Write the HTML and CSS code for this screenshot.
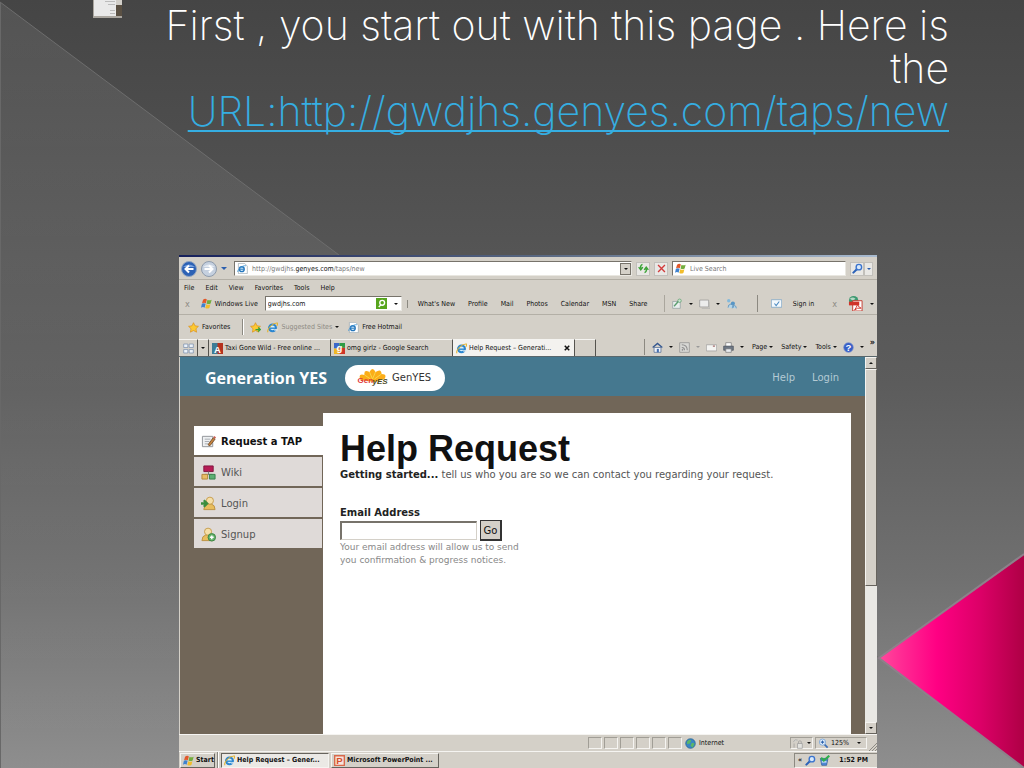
FILE: index.html
```html
<!DOCTYPE html>
<html lang="en">
<head>
  <meta charset="UTF-8">
  <meta name="viewport" content="width=device-width, initial-scale=1.0">
  <title>Help Request</title>
  <link rel="stylesheet" href="styles.css">
</head>
<body>

  <!-- Shared icons -->
  <svg class="sprite" aria-hidden="true">
    <symbol id="ie" viewBox="0 0 16 16">
      <circle cx="8" cy="8.500" r="5" fill="#d9f0fb" stroke="#2b86d0" stroke-width="3"/>
      <path d="M4 9h9" stroke="#2b86d0" stroke-width="2"/>
      <path d="M10.500 10.500h5v2h-5z" fill="#e4edf1"/>
      <path d="M1.500 15C-1 11 8 1 15 1.500c1.500 1 0 3-1 4" fill="none" stroke="#e3b32c" stroke-width="1.500"/>
    </symbol>
    <symbol id="iepage" viewBox="0 0 16 16">
      <path d="M2 .5h9l4 4v11H2z" fill="#fff" stroke="#98a4ae"/>
      <circle cx="7" cy="9" r="3.500" fill="#e4f4fc" stroke="#2677bd" stroke-width="2"/>
      <path d="M4 9h6" stroke="#2677bd" stroke-width="1.500"/>
      <path d="M1 13C1 9 8 3 13 4" fill="none" stroke="#3b94d4" stroke-width="1.200"/>
    </symbol>
    <symbol id="flag" viewBox="0 0 16 16">
      <path d="M3 2.500Q6 0 8.500 2L7 7.500Q4.500 6 1.500 7.500z" fill="#e2582a"/>
      <path d="M9.500 2.500Q12 4 15.500 2.500L14 8Q11 9.500 8 8z" fill="#74ad3e"/>
      <path d="M1.300 8.500Q4 7 6.700 8.500L5.200 14Q3 12.500 0 14z" fill="#3f82cf"/>
      <path d="M7.700 9Q10.500 10.500 13.700 9L12.200 14.500Q9 16 6.200 14.500z" fill="#f2bd2b"/>
    </symbol>
    <symbol id="star" viewBox="0 0 16 16">
      <path d="M8 1l2.200 4.600 5 .7-3.600 3.500.9 5L8 12.400l-4.500 2.400.9-5L.8 6.300l5-.7z" fill="#fcc933" stroke="#d98f1d"/>
    </symbol>
    <symbol id="user" viewBox="0 0 16 16">
      <path d="M1 14.500q0-5 4-6h4q4 1 4 6z" fill="#e8bd5c" stroke="#bd9140"/>
      <circle cx="7.500" cy="5" r="3.800" fill="#f5dfa9" stroke="#c69c4b"/>
    </symbol>
    <symbol id="lens" viewBox="0 0 16 16">
      <path d="M7 9L2 14" stroke="#2c62b8" stroke-width="3" stroke-linecap="round"/>
      <circle cx="10" cy="6" r="4" fill="#d8e9fb" stroke="#3b74cd" stroke-width="2"/>
    </symbol>
  </svg>

  <svg class="backdrop" viewBox="0 0 1024 768" preserveAspectRatio="none" aria-hidden="true">
    <defs>
      <linearGradient id="shade" x1="0" y1="0" x2="0" y2="1">
        <stop offset="0" stop-color="#fff" stop-opacity=".08"/>
        <stop offset="1" stop-color="#fff" stop-opacity="0"/>
      </linearGradient>
      <linearGradient id="pink" x1="0" y1="0" x2="1" y2="0">
        <stop offset="0" stop-color="#ff4a9c"/>
        <stop offset=".16" stop-color="#ff2a93"/>
        <stop offset=".4" stop-color="#ff0083"/>
        <stop offset=".7" stop-color="#dc0067"/>
        <stop offset="1" stop-color="#ae0045"/>
      </linearGradient>
    </defs>
    <path d="M0 2L879 658V768H0z" fill="url(#shade)"/>
    <path d="M0 2L879 658" stroke="#6d6d6d"/>
    <path d="M0.500 2V768" stroke="#686868"/>
    <path d="M1024 555L879 658L1024 768z" fill="url(#pink)"/>
    <path d="M1024 554L879 658L1024 768" fill="none" stroke="#8d818a" stroke-width="2"/>
  </svg>

  <header class="slide-title">
    <svg class="thumb" viewBox="0 0 29 18" aria-hidden="true">
      <path d="M0 0h29v18H0z" fill="#aaa69f"/>
      <path d="M1 0h22v16H1z" fill="#e9e9e9"/>
      <path d="M23 0h6v5h-6z" fill="#d2cfc9"/>
      <path d="M23 5h6v11h-6z" fill="#5a5043"/>
      <path d="M12 1.500h10M15 4.500h7M17 10.500h5M17 13.500h5" stroke="#bbb"/>
    </svg>
    <h1>First , you start out with this page . Here is the <a href="#">URL:http://gwdjhs.genyes.com/taps/new</a></h1>
  </header>

  <main class="window">
    <div class="titlebar"></div>

    <form class="bar address-bar">
      <button type="button" class="round" aria-label="Back"><svg viewBox="0 0 16 16"><circle cx="8" cy="8" r="7.500" fill="#2d62b5" stroke="#8fa3c0"/><path d="M2 6q6-5 12 0" fill="#7ca5e2"/><path d="M12.500 8H5M8 4.500L4.500 8 8 11.500" fill="none" stroke="#fff" stroke-width="2"/></svg></button>
      <button type="button" class="round" aria-label="Forward"><svg viewBox="0 0 16 16"><circle cx="8" cy="8" r="7.500" fill="#c5d0df" stroke="#8e9bac"/><path d="M2 6q6-5 12 0" fill="#e5ebf3"/><path d="M3.500 8H11M8 4.500L11.500 8 8 11.500" fill="none" stroke="#fff" stroke-width="2"/></svg></button>
      <i class="caret blue"></i>
      <label class="box url">
        <svg class="icon"><use href="#iepage"/></svg>
        <span class="url-text">http://gwdjhs.<b>genyes.com</b>/taps/new</span>
        <button type="button" class="drop" aria-label="Show addresses"><i class="caret"></i></button>
      </label>
      <button type="button" class="tool" aria-label="Refresh"><svg class="icon" viewBox="0 0 16 16"><path d="M6.500 2Q3 3 4 8M1 6l3 4 3-4M9.500 14q3.500-1 2.500-6M9 10l3-4 3 4" fill="none" stroke="#3aa336" stroke-width="2"/></svg></button>
      <button type="button" class="tool" aria-label="Stop"><svg class="icon" viewBox="0 0 16 16"><path d="M3 3l10 10M13 3L3 13" stroke="#d23b3b" stroke-width="2"/></svg></button>
      <div class="box live">
        <svg class="icon"><use href="#flag"/></svg>
        <input type="text" placeholder="Live Search" aria-label="Live Search">
      </div>
      <div class="pair">
        <button type="button" class="tool" aria-label="Search"><svg class="icon"><use href="#lens"/></svg></button>
        <button type="button" class="tool slim" aria-label="Search options"><i class="caret blue"></i></button>
      </div>
    </form>

    <nav class="bar menu-bar">
      <a href="#">File</a>
      <a href="#">Edit</a>
      <a href="#">View</a>
      <a href="#">Favorites</a>
      <a href="#">Tools</a>
      <a href="#">Help</a>
    </nav>

    <div class="bar live-bar">
      <span class="close-x">x</span>
      <a href="#" class="with-icon"><svg class="icon"><use href="#flag"/></svg>Windows Live</a>
      <div class="box live-input">
        <input type="text" value="gwdjhs.com" aria-label="Windows Live search">
        <svg class="icon" viewBox="0 0 16 16"><path d="M0 0h16v16H0z" fill="#57a51d"/><circle cx="9" cy="7" r="3.500" fill="none" stroke="#fff" stroke-width="2"/><path d="M7 10l-3 3" stroke="#fff" stroke-width="2"/></svg>
        <i class="caret"></i>
      </div>
      <nav class="links">
        <a href="#">What's New</a>
        <a href="#">Profile</a>
        <a href="#">Mail</a>
        <a href="#">Photos</a>
        <a href="#">Calendar</a>
        <a href="#">MSN</a>
        <a href="#">Share</a>
      </nav>
      <div class="live-tools">
        <svg class="icon" viewBox="0 0 16 16"><path d="M1 5h11v10H1z" fill="#e9eeee" stroke="#8c9c9c"/><path d="M3 12l7-8" stroke="#5a9d6e" stroke-width="2"/><circle cx="11" cy="4" r="2.500" fill="#c9e3cf" stroke="#5a9d6e"/></svg>
        <i class="caret"></i>
        <svg class="icon" viewBox="0 0 16 16"><path d="M1 3h13v10H1z" fill="#ececec" stroke="#929292"/><path d="M4 15h12V6" fill="none" stroke="#aaa"/></svg>
        <i class="caret"></i>
        <svg class="icon" viewBox="0 0 16 16"><circle cx="4" cy="4" r="2.500" fill="#82b9dc"/><circle cx="10" cy="8" r="3" fill="#5796c6"/><path d="M3 14q0-5 4-5t4 5M9 15q0-4 3-4t3 4" fill="#b2d5ea" stroke="#4e86b3"/></svg>
      </div>
      <div class="sign-in">
        <svg class="icon" viewBox="0 0 16 16"><path d="M.5 2.500h15v11H.5z" fill="#f4f9fd" stroke="#6f9cc2"/><path d="M5 8l2.500 3L12 5" fill="none" stroke="#4b8ac2" stroke-width="1.500"/></svg>
        <a href="#">Sign in</a>
      </div>
      <span class="close-x">x</span>
      <svg class="icon large" viewBox="0 0 16 16"><circle cx="6" cy="5" r="5" fill="#3c9870"/><path d="M2 3q3-3 6 0-3 3-6 0" fill="#b7d8c5"/><path d="M5 5h10v11H5z" fill="#fff" stroke="#c33a2e"/><path d="M1 6h11v4H1z" fill="#d0342a"/><path d="M7 15q4-6 3-8 0 5 4 6-4-1-7 2" fill="none" stroke="#d0342a"/></svg>
      <i class="caret"></i>
    </div>

    <div class="bar fav-bar">
      <a href="#" class="with-icon"><svg class="icon"><use href="#star"/></svg>Favorites</a>
      <i class="split"></i>
      <svg class="icon" viewBox="0 0 16 16"><use href="#star"/><path d="M8 11h7M12 8l3 3-3 3" fill="none" stroke="#3aa336" stroke-width="2"/></svg>
      <a href="#" class="with-icon faded"><svg class="icon"><use href="#ie"/></svg>Suggested Sites <i class="caret"></i></a>
      <a href="#" class="with-icon"><svg class="icon"><use href="#iepage"/></svg>Free Hotmail</a>
    </div>

    <div class="bar tab-bar">
      <button type="button" class="tab quick" aria-label="Quick tabs"><svg class="icon" viewBox="0 0 16 16"><path d="M1 1.500h6v5H1zM9 1.500h6v5H9zM1 9.500h6v5H1zM9 9.500h6v5H9z" fill="#edf3fa" stroke="#748bab"/></svg></button>
      <button type="button" class="tab slim" aria-label="Tab list"><i class="caret"></i></button>
      <button type="button" class="tab page"><svg class="icon" viewBox="0 0 16 16"><path d="M0 0h16v16H0z" fill="#b5331f"/><path d="M0 0h8v16H0z" fill="#3c7c96"/><text x="8" y="14" class="glyph">A</text></svg><span>Taxi Gone Wild - Free online ...</span></button>
      <button type="button" class="tab page"><svg class="icon" viewBox="0 0 16 16"><path d="M0 0h8v8H0z" fill="#3c67c9"/><path d="M8 0h8v7H8z" fill="#2e9c45"/><path d="M0 8h8v8H0z" fill="#f0b722"/><path d="M8 7h8v9H8z" fill="#cf3528"/><text x="8" y="12" class="glyph">g</text></svg><span>omg girlz - Google Search</span></button>
      <button type="button" class="tab page active"><svg class="icon"><use href="#ie"/></svg><span>Help Request – Generati...</span><svg class="cross" viewBox="0 0 8 8"><path d="M1 1l6 6M7 1L1 7" stroke="#111" stroke-width="2"/></svg></button>
      <button type="button" class="tab blank" aria-label="New tab"></button>
      <div class="commands">
        <svg class="icon" viewBox="0 0 16 16"><path d="M3 8h10v7H3z" fill="#eef2f8" stroke="#48638f"/><path d="M1 8l7-6 7 6" fill="none" stroke="#35578f" stroke-width="2"/><path d="M7 10h3v5H7z" fill="#456fb0"/></svg>
        <i class="caret"></i>
        <svg class="icon" viewBox="0 0 16 16"><path d="M1 1h14v14H1z" fill="#d8d8d5" stroke="#8b8b8b"/><path d="M4 8q4 0 4 4M4 4q8 0 8 8" fill="none" stroke="#8b8b8b" stroke-width="1.500"/><circle cx="5" cy="11.500" r="1.200" fill="#8b8b8b"/></svg>
        <i class="caret grey"></i>
        <svg class="icon" viewBox="0 0 16 16"><path d="M.5 4h15v9H.5z" fill="#f4f4f2" stroke="#9a9a9a"/><path d="M10 6h3" stroke="#a77" stroke-width="2"/></svg>
        <svg class="icon" viewBox="0 0 16 16"><path d="M4 1h8v6H4z" fill="#fff" stroke="#777"/><path d="M1 6h14v6H1z" fill="#6e7885" stroke="#474f59"/><path d="M4 10h8v5H4z" fill="#e9edf2" stroke="#777"/></svg>
        <i class="caret"></i>
        <a href="#">Page <i class="caret"></i></a>
        <a href="#">Safety <i class="caret"></i></a>
        <a href="#">Tools <i class="caret"></i></a>
        <svg class="icon" viewBox="0 0 16 16"><circle cx="8" cy="8" r="7" fill="#365ec7" stroke="#7d93cd"/><text x="8" y="13" class="glyph">?</text></svg>
        <i class="caret"></i>
        <b class="more">»</b>
      </div>
    </div>

    <div class="viewport">
      <div class="site">
        <header class="site-header">
          <strong class="brand">Generation YES</strong>
          <a href="#" class="pill">
            <svg class="pill-logo" viewBox="0 0 30 18" aria-hidden="true">
              <path d="M3 11Q0 4 7 6 6 0 12 3q3-6 6 0 6-4 6 2 6 0 3 5l-10 3z" fill="#fbad18"/>
              <path d="M12 3l3 7M18 3l-3 7M7 6l6 4M24 5l-7 5" stroke="#f8d64a"/>
              <text x="0" y="14" class="logo-gen">Gen</text>
              <text x="15" y="15" class="logo-yes">yES</text>
            </svg>
            GenYES
          </a>
          <nav class="site-links">
            <a href="#">Help</a>
            <a href="#">Login</a>
          </nav>
        </header>

        <div class="site-body">
          <nav class="side">
            <a href="#" class="current"><svg viewBox="0 0 16 16"><path d="M1.500 2.500h11v11h-11z" fill="#eef0f2" stroke="#8f9397"/><path d="M4 5.500h6M4 8h5M4 10.500h4" stroke="#a6abb0"/><path d="M7.500 11.500L13 4l2 1.500-5.500 7z" fill="#c8843f" stroke="#77522e"/><path d="M13 3.500l1-1.500 2 1.500-1 1.500z" fill="#c95c52"/></svg>Request a TAP</a>
            <a href="#"><svg viewBox="0 0 16 16"><path d="M3 1h10v6H3z" fill="#b71c55" stroke="#801540"/><path d="M8 7v3M4 10h8" stroke="#777"/><path d="M1 10h6v5H1z" fill="#e7bd65" stroke="#b3863b"/><path d="M9 10h6v5H9z" fill="#5caf73" stroke="#34814b"/></svg>Wiki</a>
            <a href="#"><svg viewBox="0 0 16 16"><use href="#user" x="2"/><path d="M0 8h5M3 4.500L6.500 8 3 11.500" fill="none" stroke="#3a8d3e" stroke-width="2.500"/></svg>Login</a>
            <a href="#"><svg viewBox="0 0 16 16"><use href="#user"/><circle cx="11.500" cy="11" r="4" fill="#64b26b" stroke="#398442"/><path d="M9.500 11h4M11.500 9v4" stroke="#fff" stroke-width="1.500"/></svg>Signup</a>
          </nav>

          <section class="content">
            <h2>Help Request</h2>
            <p class="lead"><b>Getting started...</b> tell us who you are so we can contact you regarding your request.</p>
            <form class="email-form">
              <label for="email">Email Address</label>
              <div class="email-row">
                <input type="text" id="email">
                <button type="button">Go</button>
              </div>
              <p class="hint">Your email address will allow us to send<br>you confirmation &amp; progress notices.</p>
            </form>
          </section>
        </div>
      </div>

      <div class="scrollbar">
        <button type="button" aria-label="Scroll up"><i class="caret up"></i></button>
        <div class="thumb-bar"></div>
        <button type="button" aria-label="Scroll down"><i class="caret"></i></button>
      </div>
    </div>

    <div class="bar status-bar">
      <i class="cell"></i><i class="cell"></i><i class="cell"></i><i class="cell"></i><i class="cell"></i><i class="cell"></i>
      <span class="zone"><svg class="icon" viewBox="0 0 16 16"><circle cx="8" cy="8" r="7" fill="#3a86c4" stroke="#27618f"/><path d="M3 5q4-4 6-1l-2 4-4 1zM10 7l4 1-3 6-3-3z" fill="#5cb766"/></svg>Internet</span>
      <span class="cell wide"><svg class="icon" viewBox="0 0 16 16"><path d="M2 6q2-5 6-3M8 8h7v7H8z" fill="#e3e3df" stroke="#999"/><path d="M9.500 8V5q2-2 4 0v3M3 14V8" fill="none" stroke="#999"/></svg><i class="caret"></i></span>
      <span class="cell zoom"><svg class="icon" viewBox="0 0 16 16"><path d="M9 9l5 5" stroke="#3b6fb8" stroke-width="2.500"/><circle cx="6.500" cy="6" r="4.500" fill="#e6f1fc" stroke="#5d93d2"/><path d="M4 6h5M6.500 3.500v5" stroke="#2c63ad" stroke-width="1.500"/></svg>125% <i class="caret"></i></span>
      <svg class="grip" viewBox="0 0 8 8"><path d="M0 8l8-8M3 8l5-5M6 8l2-2" stroke="#8c8a83"/></svg>
    </div>

    <footer class="bar taskbar">
      <button type="button" class="start"><svg class="icon"><use href="#flag"/></svg>Start</button>
      <i class="split"></i>
      <button type="button" class="task pressed"><svg class="icon"><use href="#ie"/></svg>Help Request – Gener...</button>
      <button type="button" class="task"><svg class="icon" viewBox="0 0 16 16"><path d="M1 1h14v14H1z" fill="#f7e5dc" stroke="#d9694b" stroke-width="2"/><text x="8" y="13" class="glyph red">P</text></svg>Microsoft PowerPoint ...</button>
      <div class="tray">
        <b>«</b>
        <svg class="icon"><use href="#lens"/></svg>
        <svg class="icon" viewBox="0 0 16 16"><path d="M2 5h11l-2 10H4z" fill="#4f88d4" stroke="#2d589c"/><path d="M4 10h7" stroke="#d6e6f9" stroke-width="2"/><path d="M3 4l4 4 8-7" fill="none" stroke="#2fae4b" stroke-width="3"/></svg>
        <time>1:52 PM</time>
      </div>
    </footer>
  </main>

</body>
</html>
```
FILE: styles.css
```css
* { box-sizing: border-box; }
body {
  display: flex;
  flex-direction: column;
  min-height: 100vh;
  margin: 0;
  background: linear-gradient(#454545 0%, #555 33%, #5c5c5c 50%, #707070 75%, #8e8e8e 100%);
  font-family: "DejaVu Sans Condensed", "Liberation Sans", sans-serif;
  font-size: 7px;
  color: #111;
}
a { color: inherit; text-decoration: none; }
button, input {
  font: inherit;
  color: inherit;
}
button { padding: 0; }
.sprite {
  position: absolute;
  width: 0;
  height: 0;
}
.backdrop {
  position: absolute;
  z-index: -1;
  width: 100%;
  height: 100%;
}

/* Slide heading */
.slide-title {
  display: flex;
  align-items: flex-start;
  justify-content: space-between;
  min-height: 255px;
  padding: 0 75px 0 93px;
}
.thumb {
  flex: none;
  width: 29px;
  height: 18px;
}
.slide-title h1 {
  max-width: 800px;
  margin: 0;
  padding-top: 4px;
  color: #fff;
  font: 200 41px/43px Inter, "Liberation Sans", sans-serif;
  text-align: right;
}
.slide-title a {
  display: block;
  color: #35aee2;
  text-decoration: underline;
  text-decoration-thickness: 2px;
  text-underline-offset: 4px;
  text-decoration-skip-ink: none;
}

/* Browser window */
.window {
  display: flex;
  flex: 1;
  flex-direction: column;
  margin: 0 147px 0 179px;
  background: #d4d0c8;
}
.titlebar {
  height: 2px;
  background: linear-gradient(90deg, #16205c, #56657f 50%, #a9bbd0);
}
.bar {
  display: flex;
  align-items: center;
  white-space: nowrap;
}
.icon {
  flex: none;
  width: 11px;
  height: 11px;
}
.glyph {
  fill: #fff;
  font: bold 14px "Liberation Sans", sans-serif;
  text-anchor: middle;
}
.red { fill: #d5502c; }
.caret {
  flex: none;
  display: inline-block;
  border: 2px solid transparent;
  border-top-color: #111;
  border-bottom: 0;
  vertical-align: middle;
}
.caret.blue { border-top-color: #2c5fae; }
.caret.grey { border-top-color: #999; }
.caret.up {
  border-top: 0;
  border-bottom: 2px solid #111;
}
.box {
  display: flex;
  align-items: center;
  gap: 4px;
  height: 15px;
  padding-left: 2px;
  background: #fff;
  border: 1px solid #77736b;
  border-right-color: #e9e7e1;
  border-bottom-color: #e9e7e1;
}
.box input {
  flex: 1;
  width: 0;
  min-width: 0;
  padding: 0;
  border: 0;
  background: none;
}
.box input::placeholder { color: #777; opacity: 1; }
.split {
  height: 16px;
  border-left: 1px solid #8c8981;
  border-right: 1px solid #fff;
}
.with-icon {
  display: flex;
  align-items: center;
  gap: 3px;
}
.close-x {
  color: #8e8b84;
  font-size: 9px;
}

.address-bar {
  gap: 4px;
  height: 23px;
  padding: 1px 4px 0 2px;
  border-bottom: 1px solid #b3afa6;
}
.round {
  width: 16px;
  height: 16px;
  border: 0;
  background: none;
}
.round svg { display: block; }
.address-bar > .caret {
  margin-right: 3px;
  border-width: 3px 3px 0;
}
.url { flex: 1; }
.url-text {
  flex: 1;
  color: #777;
}
.url-text b {
  color: #111;
  font-weight: normal;
}
.drop {
  display: grid;
  place-items: center;
  width: 11px;
  height: 12px;
  background: #d4d0c8;
  border: 1px solid #77736b;
}
.tool {
  display: grid;
  place-items: center;
  width: 14px;
  height: 14px;
  background: #e9e8e5;
  border: 1px solid #c2c0bb;
}
.slim { width: 9px; }
.pair { display: flex; }
.live { width: 174px; }

.menu-bar {
  gap: 11px;
  height: 16px;
  padding-left: 5px;
}
.live-bar {
  height: 19px;
  padding: 0 3px 3px 6px;
  border-bottom: 1px solid #b3afa6;
}
.live-bar .with-icon { margin: 0 7px 0 11px; }
.live-input { width: 137px; }
.live-input .caret { margin: 0 3px; }
.links {
  display: flex;
  flex: 1;
  gap: 13px;
  margin-left: 5px;
  padding-left: 10px;
  border-left: 1px solid #8c8981;
}
.live-tools {
  display: flex;
  align-items: center;
  gap: 6px;
  padding: 3px 20px 3px 7px;
  border-left: 1px solid #aaa69d;
}
.sign-in {
  display: flex;
  align-items: center;
  gap: 11px;
  margin-right: 18px;
  padding: 3px 0 3px 13px;
  border-left: 1px solid #8c8981;
}
.large {
  width: 15px;
  height: 15px;
  margin: 0 7px 0 11px;
}

.fav-bar {
  gap: 9px;
  height: 24px;
  padding-left: 9px;
}
.fav-bar .split { margin: 0 -3px 0 3px; }
.fav-bar svg + .with-icon { margin-left: -3px; }
.faded { color: #8e8b84; }

.tab-bar {
  height: 18px;
  align-items: stretch;
  border-bottom: 1px solid #59676c;
}
.tab {
  display: flex;
  align-items: center;
  justify-content: center;
  gap: 2px;
  background: #d4d0c8;
  border: 0;
  border-top: 1px solid #f5f4f1;
  border-right: 1px solid #55534e;
}
.quick { width: 19px; }
.tab.slim { width: 11px; }
.tab.page {
  justify-content: flex-start;
  width: 122px;
  padding: 0 4px 0 3px;
}
.tab.active { background: #f3f2ef; }
.tab.active span { flex: 1; text-align: left; }
.tab.blank { width: 21px; }
.cross {
  width: 6px;
  height: 6px;
}
.commands {
  display: flex;
  align-items: center;
  gap: 6px;
  height: 16px;
  margin-left: auto;
  padding: 0 2px 0 7px;
  border-left: 1px solid #8c8981;
}
.commands a { margin-left: 2px; }
.more {
  align-self: flex-start;
  font-size: 9px;
  line-height: 7px;
}

/* Page inside the browser */
.viewport {
  display: flex;
  flex: 1;
  padding-left: 1px;
}
.site {
  display: flex;
  flex: 1;
  flex-direction: column;
  background: #716658;
  font-family: "DejaVu Sans", sans-serif;
}
.site-header {
  display: flex;
  align-items: center;
  height: 39px;
  padding: 2px 26px 0 25px;
  background: #45788f;
}
.brand {
  color: #fff;
  font: bold 16px/24px "Open Sans", sans-serif;
}
.pill {
  display: flex;
  align-items: center;
  gap: 4px;
  height: 26px;
  margin-left: 18px;
  padding: 0 14px 0 12px;
  border-radius: 13px;
  background: #fff;
  color: #333;
  font-size: 10px;
}
.pill-logo {
  width: 31px;
  height: 18px;
}
.logo-gen {
  fill: #df3b3b;
  font: bold 8px "Liberation Sans", sans-serif;
}
.logo-yes {
  fill: #4a4a25;
  font: italic bold 8px "Liberation Sans", sans-serif;
}
.site-links {
  display: flex;
  gap: 17px;
  margin-left: auto;
  color: #b4cad4;
  font-size: 10px;
}
.site-body {
  display: flex;
  flex: 1;
  padding: 17px 14px 0;
}
.side {
  display: flex;
  flex-direction: column;
  gap: 2px;
  width: 129px;
  padding-top: 13px;
  font-size: 10px;
}
.side a {
  display: flex;
  align-items: center;
  gap: 5px;
  height: 29px;
  margin-right: 1px;
  padding: 1px 0 0 7px;
  background: #dfdad8;
  color: #555;
}
.side svg {
  width: 15px;
  height: 15px;
}
.side .current {
  margin-right: 0;
  background: #fff;
  color: #111;
  font-weight: bold;
}
.content {
  flex: 1;
  padding: 17px;
  background: #fff;
}
.content h2 {
  margin: 0;
  font: bold 36px/38px "Liberation Sans", sans-serif;
}
.lead {
  margin: 0;
  color: #555;
  font-size: 10px;
  line-height: 13px;
}
.lead b { color: #222; }
.email-form {
  margin-top: 24px;
  font-size: 10px;
}
.email-form label {
  display: block;
  color: #222;
  font-weight: bold;
  line-height: 15px;
}
.email-row {
  display: flex;
  align-items: center;
  gap: 3px;
}
.email-row input {
  width: 137px;
  height: 19px;
  border: 2px solid #77736b;
  border-right: 1px solid #d4d0c8;
  border-bottom: 1px solid #d4d0c8;
}
.email-row button {
  width: 22px;
  height: 21px;
  background: #d4d0c8;
  border: 1px solid #333;
  border-right-width: 2px;
  border-bottom-width: 2px;
}
.hint {
  margin: 0;
  color: #888;
  font-size: 9px;
  line-height: 13px;
}

.scrollbar {
  display: flex;
  flex-direction: column;
  width: 12px;
  background: #e9e8e4;
}
.scrollbar button {
  display: grid;
  place-items: center;
  height: 12px;
}
.scrollbar button, .thumb-bar {
  background: #d4d0c8;
  border: 1px solid #f5f4f1;
  border-right-color: #66635d;
  border-bottom-color: #66635d;
}
.thumb-bar {
  flex: 0 1 217px;
}
.scrollbar button:last-child { margin-top: auto; }

/* Status bar and taskbar */
.status-bar {
  justify-content: flex-end;
  gap: 2px;
  height: 17px;
  border-top: 1px solid #f5f4f1;
}
.cell {
  display: flex;
  align-items: center;
  gap: 4px;
  width: 14px;
  height: 12px;
  border: 1px solid #a19e96;
  border-right-color: #f5f4f1;
  border-bottom-color: #f5f4f1;
}
.zone {
  display: flex;
  align-items: center;
  gap: 3px;
  width: 104px;
  padding-left: 1px;
}
.cell.wide {
  width: 23px;
  padding-left: 1px;
}
.cell.zoom {
  gap: 2px;
  width: 52px;
  padding-left: 2px;
}
.cell.zoom .caret { margin-left: 6px; }
.grip {
  align-self: flex-end;
  width: 8px;
  height: 8px;
}
.taskbar {
  gap: 2px;
  height: 17px;
  padding-left: 1px;
  border-top: 1px solid #f5f4f1;
  font-weight: bold;
}
.start, .task {
  display: flex;
  align-items: center;
  gap: 2px;
  height: 15px;
  padding: 0 2px;
  background: #d4d0c8;
  border: 1px solid #f5f4f1;
  border-right-color: #66635d;
  border-bottom-color: #66635d;
}
.start { width: 35px; }
.task { width: 108px; }
.pressed {
  background: #ebe9e5;
  border-color: #66635d #f5f4f1 #f5f4f1 #66635d;
}
.tray {
  display: flex;
  align-items: center;
  gap: 3px;
  width: 83px;
  height: 15px;
  margin-left: auto;
  padding: 0 9px 0 3px;
  border: 1px solid #8c8981;
  border-right: 0;
  border-bottom-color: #f5f4f1;
}
.tray time { margin-left: auto; }
```
